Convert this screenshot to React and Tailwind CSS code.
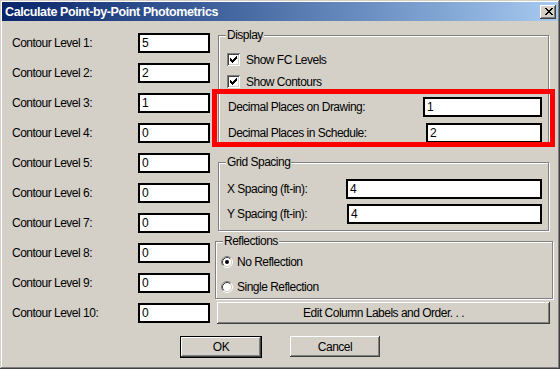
import React from 'react'

const raised =
  'bg-[#d4d0c8] shadow-[inset_-1px_-1px_#404040,inset_1px_1px_#fff,inset_-2px_-2px_#808080,inset_2px_2px_#d4d0c8]'
const etched = 'border border-[#808080] shadow-[1px_1px_0_#fff,inset_1px_1px_0_#fff]'
const legend = 'block w-fit -mt-[8px] ml-[7px] px-[1px] bg-[#d4d0c8] leading-[14px]'

function Field({ value, className }) {
  return (
    <div className={`h-[20px] border-2 border-black bg-white pl-[2px] flex items-center ${className}`}>
      {value}
    </div>
  )
}

function Checkbox() {
  return (
    <div className="w-[13px] h-[13px] bg-white shrink-0 relative shadow-[inset_1px_1px_#808080,inset_-1px_-1px_#fff,inset_2px_2px_#404040,inset_-2px_-2px_#d4d0c8]">
      <svg width="7" height="7" viewBox="0 0 7 7" className="absolute left-[3px] top-[3px]" shapeRendering="crispEdges">
        <path fill="#000" d="M6 0h1v1H6zM5 1h2v1H5zM0 2h1v1H0zM4 2h3v1H4zM0 3h2v1H0zM3 3h3v1H3zM0 4h5v1H0zM1 5h3v1H1zM2 6h1v1H2z" />
      </svg>
    </div>
  )
}

function Radio({ checked }) {
  return (
    <svg width="12" height="12" viewBox="0 0 12 12" className="shrink-0">
      <circle cx="6" cy="6" r="4.5" fill="#fff" />
      <path d="M2.11 9.89A5.5 5.5 0 0 1 9.89 2.11" stroke="#808080" fill="none" />
      <path d="M9.89 2.11A5.5 5.5 0 0 1 2.11 9.89" stroke="#fff" fill="none" />
      <path d="M2.82 9.18A4.5 4.5 0 0 1 9.18 2.82" stroke="#404040" fill="none" />
      <path d="M9.18 2.82A4.5 4.5 0 0 1 2.82 9.18" stroke="#d4d0c8" fill="none" />
      {checked && <circle cx="6" cy="6" r="2" fill="#000" />}
    </svg>
  )
}

export default function App() {
  const levels = ['5', '2', '1', '0', '0', '0', '0', '0', '0', '0']

  return (
    <div className="relative w-[560px] h-[369px] p-[2px] bg-[#d4d0c8] text-black text-[12px] tracking-[-0.5px] leading-[14px] font-['Liberation_Sans',Arial,sans-serif] shadow-[inset_-1px_-1px_#404040,inset_1px_1px_#d4d0c8,inset_-2px_-2px_#808080,inset_2px_2px_#fff]">
      {/* title bar */}
      <div className="h-[19px] flex items-center justify-between pl-[3px] pr-[2px] bg-linear-to-r from-[#0a246a] to-[#a6caf0]">
        <span className="text-white font-bold text-[12.5px] tracking-[-0.4px]">Calculate Point-by-Point Photometrics</span>
        <div className={`w-[16px] h-[14px] flex items-center justify-center pl-[1px] ${raised}`}>
          <svg width="8" height="7" viewBox="0 0 8 7" shapeRendering="crispEdges">
            <path fill="#000" d="M0 0h2v1H0zM6 0h2v1H6zM1 1h2v1H1zM5 1h2v1H5zM2 2h4v1H2zM3 3h2v1H3zM2 4h4v1H2zM1 5h2v1H1zM5 5h2v1H5zM0 6h2v1H0zM6 6h2v1H6z" />
          </svg>
        </div>
      </div>

      <div className="flex">
        {/* contour levels */}
        <div className="flex flex-col gap-[10px] pl-[10px] pt-[12px]">
          {levels.map((v, i) => (
            <div key={i} className="flex items-center h-[20px]">
              <span className="w-[126px]">Contour Level {i + 1}:</span>
              <Field value={v} className="w-[72px]" />
            </div>
          ))}
        </div>

        {/* right side */}
        <div className="flex flex-col">
          <div className={`mt-[14px] ml-[8px] w-[331px] h-[111px] ${etched}`}>
            <span className={legend}>Display</span>
            <div className="flex items-center gap-[6px] h-[13px] mt-[11px] pl-[8px]">
              <Checkbox />
              <span>Show FC Levels</span>
            </div>
            <div className="flex items-center gap-[6px] h-[13px] mt-[9px] pl-[8px]">
              <Checkbox />
              <span>Show Contours</span>
            </div>
            <div className="flex items-center h-[20px] mt-[9px] pl-[9px] pr-[6px]">
              <span>Decimal Places on Drawing:</span>
              <Field value="1" className="w-[119px] ml-auto" />
            </div>
            <div className="flex items-center h-[20px] mt-[6px] pl-[9px] pr-[6px]">
              <span>Decimal Places in Schedule:</span>
              <Field value="2" className="w-[116px] ml-auto" />
            </div>
          </div>

          <div className={`mt-[16px] ml-[8px] w-[331px] h-[69px] ${etched}`}>
            <span className={legend}>Grid Spacing</span>
            <div className="flex items-center h-[19px] mt-[10px] pl-[8px] pr-[6px]">
              <span>X Spacing (ft-in):</span>
              <Field value="4" className="w-[196px] h-[19px] ml-auto" />
            </div>
            <div className="flex items-center h-[19px] mt-[6px] pl-[8px] pr-[6px]">
              <span>Y Spacing (ft-in):</span>
              <Field value="4" className="w-[195px] h-[19px] ml-auto" />
            </div>
          </div>

          <div className={`mt-[10px] ml-[5px] w-[338px] h-[58px] ${etched}`}>
            <span className={legend}>Reflections</span>
            <div className="flex items-center gap-[4px] h-[12px] mt-[8px] pl-[5px]">
              <Radio checked />
              <span>No Reflection</span>
            </div>
            <div className="flex items-center gap-[4px] h-[12px] mt-[13px] pl-[5px]">
              <Radio />
              <span>Single Reflection</span>
            </div>
          </div>

          <button className={`mt-[3px] ml-[7px] w-[333px] h-[22px] flex items-center justify-center ${raised}`}>
            Edit Column Labels and Order. . .
          </button>
        </div>
      </div>

      {/* dialog buttons */}
      <div className="flex gap-[28px] pl-[178px] mt-[12px]">
        <div className="w-[82px] h-[22px] border border-black">
          <button className={`w-full h-full flex items-center justify-center ${raised}`}>OK</button>
        </div>
        <button className={`w-[90px] h-[21px] flex items-center justify-center ${raised}`}>Cancel</button>
      </div>

      {/* red highlight annotation */}
      <div className="absolute left-[212px] top-[89px] w-[343px] h-[58px] border-[5px] border-[#ff0000] pointer-events-none" />
    </div>
  )
}
